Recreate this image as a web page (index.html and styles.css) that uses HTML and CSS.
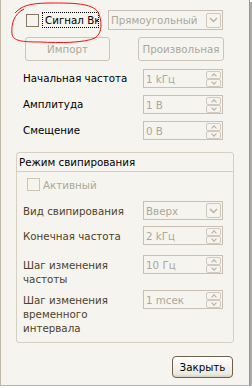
FILE: index.html
```html
<!DOCTYPE html>
<html>
<head>
<title>Генератор</title>
<link rel="stylesheet" href="styles.css">
</head>
<body>
<div class="dialog">
  <div class="top-row">
    <label class="check-wrap">
      <span class="box"></span>
      <span class="focus">Сигнал Вкл</span>
    </label>
    <div class="combo wide">
      <span class="value">Прямоугольный</span>
      <span class="drop"><svg width="9" height="6" viewBox="0 0 9 6"><path d="M1 1l3.5 3.5L8 1" fill="none" stroke="#b9b0a2" stroke-width="1.4"/></svg></span>
    </div>
  </div>

  <div class="btn-row">
    <button class="btn" disabled>Импорт</button>
    <button class="btn wide-btn" disabled>Произвольная</button>
  </div>

  <div class="fields">
    <div class="lbl">Начальная частота</div>
    <div class="spin"><span class="value">1 kГц</span><span class="arrows"><span class="up"></span><span class="down"></span></span></div>
    <div class="lbl">Амплитуда</div>
    <div class="spin"><span class="value">1 В</span><span class="arrows"><span class="up"></span><span class="down"></span></span></div>
    <div class="lbl">Смещение</div>
    <div class="spin"><span class="value">0 В</span><span class="arrows"><span class="up"></span><span class="down"></span></span></div>
  </div>

  <div class="group">
    <div class="group-title">Режим свипирования</div>
    <label class="check-wrap off">
      <span class="box"></span>
      <span>Активный</span>
    </label>
    <div class="fields inner">
      <div class="lbl">Вид свипирования</div>
      <div class="combo">
        <span class="value">Вверх</span>
        <span class="drop"><svg width="9" height="6" viewBox="0 0 9 6"><path d="M1 1l3.5 3.5L8 1" fill="none" stroke="#b9b0a2" stroke-width="1.4"/></svg></span>
      </div>
      <div class="lbl">Конечная частота</div>
      <div class="spin"><span class="value">2 kГц</span><span class="arrows"><span class="up"></span><span class="down"></span></span></div>
      <div class="lbl">Шаг изменения<br>частоты</div>
      <div class="spin"><span class="value">10 Гц</span><span class="arrows"><span class="up"></span><span class="down"></span></span></div>
      <div class="lbl">Шаг изменения<br>временного<br>интервала</div>
      <div class="spin"><span class="value">1 mсек</span><span class="arrows"><span class="up"></span><span class="down"></span></span></div>
    </div>
  </div>

  <div class="bottom-row">
    <button class="btn close">Закрыть</button>
  </div>

  <!-- red marker drawn over the screenshot -->
  <svg class="mark" width="110" height="50" viewBox="0 0 110 50">
    <path d="M24 9 C14 14 11 24 12 34 C13 41 22 42 40 42 C60 43 84 43 95 38 C103 33 102 20 98 12 C92 3 72 3 52 3 C38 3 28 4 21 8 C18 10 16 12 15 13" fill="none" stroke="#f01010" stroke-width="1"/>
  </svg>
</div>
</body>
</html>
```

FILE: styles.css
```css
body {
  margin: 0;
  background: #ffffff;
  font-family: Tahoma, "DejaVu Sans", sans-serif;
  font-size: 10.3px;
}

.dialog {
  position: relative;
  box-sizing: border-box;
  width: 250px;
  height: 386px;
  background: #f5f4ef;
  border-left: 1px solid #c2baa8;
  border-right: 1px solid #9c968a;
  border-bottom: 1px solid #b8b0a0;
  box-shadow: 2px 2px 0 #a9a9a9;
  display: flex;
  flex-direction: column;
}

.top-row {
  display: flex;
  margin-top: 10px;
  padding-left: 25px;
  height: 20px;
}

.check-wrap {
  display: flex;
  align-items: center;
  width: 82px;
  color: #000;
}

.box {
  box-sizing: border-box;
  width: 13px;
  height: 13px;
  border: 1px solid #857765;
  background: #f5f4ef;
  flex: none;
}

.focus {
  margin-left: 3px;
  width: 53px;
  padding: 1px 0 1px 2px;
  border: 1px dotted #000;
  white-space: nowrap;
  overflow: hidden;
}

.combo, .spin {
  box-sizing: border-box;
  position: relative;
  width: 80px;
  height: 19px;
  border: 1px solid #c9c0b3;
  color: #aca899;
  display: flex;
  align-items: center;
  justify-content: space-between;
}

.combo.wide {
  width: 115px;
  height: 20px;
}

.value {
  padding-left: 2px;
  white-space: nowrap;
}

.drop {
  box-sizing: border-box;
  width: 15px;
  height: 15px;
  margin-right: 1px;
  border: 1px solid #cfc7ba;
  border-radius: 2px;
  display: flex;
  align-items: center;
  justify-content: center;
}

.arrows {
  display: flex;
  flex-direction: column;
  margin-right: 1px;
}

.arrows span {
  box-sizing: border-box;
  width: 15px;
  height: 8px;
  border: 1px solid #d2cabe;
  border-radius: 2px;
  position: relative;
}

.arrows .up::after,
.arrows .down::after {
  content: "";
  position: absolute;
  left: 5px;
  width: 3px;
  height: 3px;
  border-left: 1px solid #b5ad9f;
  border-top: 1px solid #b5ad9f;
}

.arrows .up::after {
  top: 2px;
  transform: rotate(45deg);
}

.arrows .down::after {
  top: 0;
  transform: rotate(225deg);
}

.btn-row {
  display: flex;
  gap: 28px;
  margin-top: 7px;
  padding-left: 24px;
}

.btn {
  font-family: inherit;
  font-size: 10.3px;
  width: 85px;
  height: 24px;
  border: 1px solid #cbc5b8;
  border-radius: 3px;
  background: #f5f4ef;
  color: #aca899;
  padding: 0;
}

.wide-btn {
  width: 86px;
}

.fields {
  display: grid;
  grid-template-columns: 120px 80px;
  row-gap: 7px;
  margin-top: 8px;
  padding-left: 22px;
}

.lbl {
  line-height: 14px;
  padding-top: 2px;
}

.group {
  box-sizing: border-box;
  margin: 12px 0 0 15px;
  width: 218px;
  height: 191px;
  border: 1px solid #d5d0c2;
  border-radius: 3px;
}

.group-title {
  height: 18px;
  line-height: 18px;
  padding-left: 2px;
  border-bottom: 1px solid #d5d0c2;
}

.check-wrap.off {
  margin: 6px 0 0 10px;
  color: #aca899;
}

.check-wrap.off .box {
  border-color: #cbc5b8;
  margin-right: 3px;
}

.fields.inner {
  grid-template-rows: 25px 29px 35px auto;
  row-gap: 0;
  margin-top: 10px;
  padding-left: 6px;
  color: #4f4128;
}

.fields.inner .lbl {
  padding-top: 3px;
}

.bottom-row {
  display: flex;
  justify-content: flex-end;
  margin-top: 13px;
  padding-right: 16px;
}

.close {
  width: 61px;
  height: 22px;
  color: #000;
  border: 1px solid #6f5f4c;
  border-radius: 4px;
  background: linear-gradient(#ffffff, #ece9e0 85%, #d8d2c4);
}

.mark {
  position: absolute;
  left: -1px;
  top: 0;
}
```
